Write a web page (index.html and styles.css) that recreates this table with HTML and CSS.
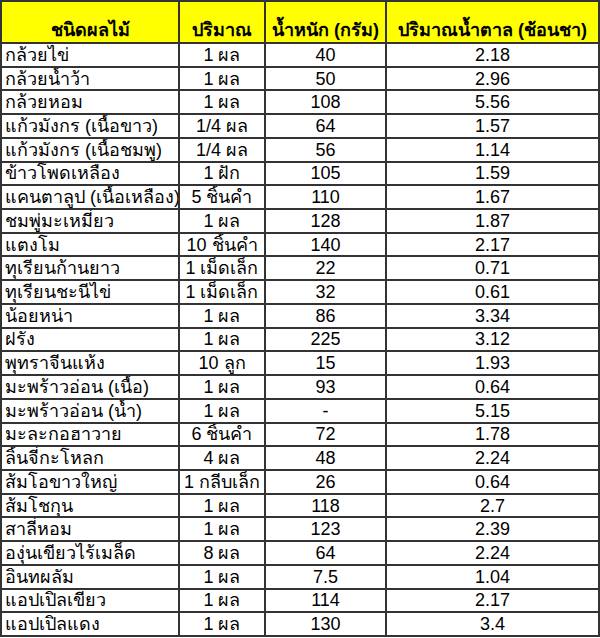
FILE: index.html
```html
<!DOCTYPE html>
<html lang="th">
<head>
<meta charset="utf-8">
<link rel="stylesheet" href="styles.css">
</head>
<body>
<table class="sugar">
<colgroup>
<col class="c1"><col class="c2"><col class="c3"><col class="c4">
</colgroup>
<thead>
<tr><th>ชนิดผลไม้</th><th>ปริมาณ</th><th>น้ำหนัก (กรัม)</th><th>ปริมาณน้ำตาล (ช้อนชา)</th></tr>
</thead>
<tbody>
<tr><td>กล้วยไข่</td><td>1 ผล</td><td>40</td><td>2.18</td></tr>
<tr><td>กล้วยน้ำว้า</td><td>1 ผล</td><td>50</td><td>2.96</td></tr>
<tr><td>กล้วยหอม</td><td>1 ผล</td><td>108</td><td>5.56</td></tr>
<tr><td>แก้วมังกร (เนื้อขาว)</td><td>1/4 ผล</td><td>64</td><td>1.57</td></tr>
<tr><td>แก้วมังกร (เนื้อชมพู)</td><td>1/4 ผล</td><td>56</td><td>1.14</td></tr>
<tr><td>ข้าวโพดเหลือง</td><td>1 ฝัก</td><td>105</td><td>1.59</td></tr>
<tr><td>แคนตาลูป (เนื้อเหลือง)</td><td>5 ชิ้นคำ</td><td>110</td><td>1.67</td></tr>
<tr><td>ชมพู่มะเหมี่ยว</td><td>1 ผล</td><td>128</td><td>1.87</td></tr>
<tr><td>แตงโม</td><td>10 ชิ้นคำ</td><td>140</td><td>2.17</td></tr>
<tr><td>ทุเรียนก้านยาว</td><td>1 เม็ดเล็ก</td><td>22</td><td>0.71</td></tr>
<tr><td>ทุเรียนชะนีไข่</td><td>1 เม็ดเล็ก</td><td>32</td><td>0.61</td></tr>
<tr><td>น้อยหน่า</td><td>1 ผล</td><td>86</td><td>3.34</td></tr>
<tr><td>ฝรั่ง</td><td>1 ผล</td><td>225</td><td>3.12</td></tr>
<tr><td>พุทราจีนแห้ง</td><td>10 ลูก</td><td>15</td><td>1.93</td></tr>
<tr><td>มะพร้าวอ่อน (เนื้อ)</td><td>1 ผล</td><td>93</td><td>0.64</td></tr>
<tr><td>มะพร้าวอ่อน (น้ำ)</td><td>1 ผล</td><td>-</td><td>5.15</td></tr>
<tr><td>มะละกอฮาวาย</td><td>6 ชิ้นคำ</td><td>72</td><td>1.78</td></tr>
<tr><td>ลิ้นจี่กะโหลก</td><td>4 ผล</td><td>48</td><td>2.24</td></tr>
<tr><td>ส้มโอขาวใหญ่</td><td>1 กลีบเล็ก</td><td>26</td><td>0.64</td></tr>
<tr><td>ส้มโชกุน</td><td>1 ผล</td><td>118</td><td>2.7</td></tr>
<tr><td>สาลี่หอม</td><td>1 ผล</td><td>123</td><td>2.39</td></tr>
<tr><td>องุ่นเขียวไร้เมล็ด</td><td>8 ผล</td><td>64</td><td>2.24</td></tr>
<tr><td>อินทผลัม</td><td>1 ผล</td><td>7.5</td><td>1.04</td></tr>
<tr><td>แอปเปิลเขียว</td><td>1 ผล</td><td>114</td><td>2.17</td></tr>
<tr><td>แอปเปิลแดง</td><td>1 ผล</td><td>130</td><td>3.4</td></tr>
</tbody>
</table>
</body>
</html>
```
FILE: styles.css
```css
html, body {
  margin: 0;
  padding: 0;
  background: #ffffff;
}
.sugar {
  border-collapse: collapse;
  table-layout: fixed;
  width: 598px;
  margin-left: 0;
  font-family: "Liberation Sans", "Noto Sans", sans-serif;
  font-size: 18px;
  color: #000;
}
.c1 { width: 178px; }
.c2 { width: 86px; }
.c3 { width: 121px; }
.c4 { width: 213px; }
.sugar th, .sugar td {
  border: 2px solid #333;
  padding: 0 3px;
  line-height: 20px;
  white-space: nowrap;
  overflow: hidden;
}
.sugar th {
  background: #ffff00;
  height: 38px;
  vertical-align: bottom;
  padding-bottom: 2px;
  font-weight: bold;
  text-align: center;
}
.sugar td {
  height: 21.72px;
  text-align: center;
  vertical-align: middle;
}
.sugar td:first-child {
  text-align: left;
}
```
